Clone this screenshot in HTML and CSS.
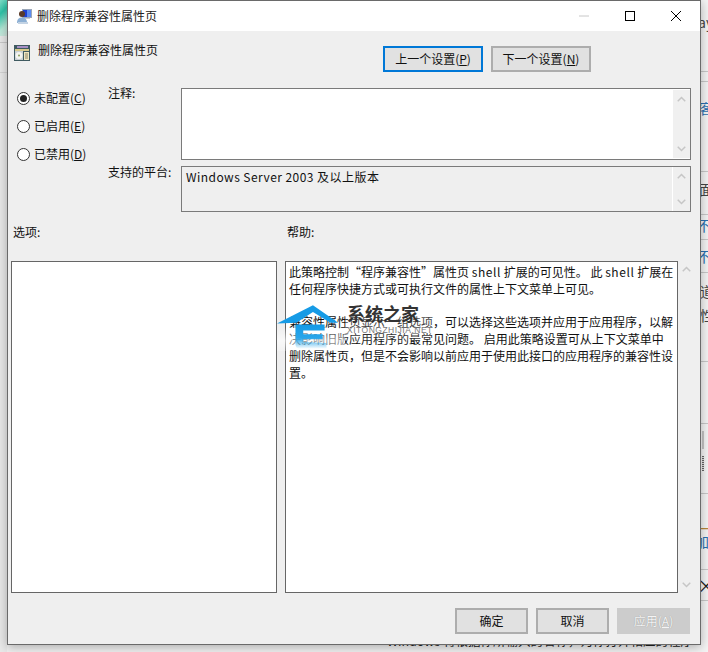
FILE: index.html
```html
<!DOCTYPE html>
<html lang="zh-CN">
<head>
    <meta charset="UTF-8">
    <title>删除程序兼容性属性页</title>
    <link rel="stylesheet" href="styles.css">
</head>
<body>
    <!-- desktop behind the dialog -->
    <div class="bg-left"></div>
    <div class="bg-right">
        <div class="bg-row row-1">ay</div>
        <div class="bg-row row-2"></div>
        <div class="bg-row row-3 blue">客</div>
        <div class="bg-row row-4">面</div>
        <div class="bg-row row-5 blue">不</div>
        <div class="bg-row row-6 blue">不</div>
        <div class="bg-row row-7">道<br>性</div>
        <div class="bg-row row-8"></div>
        <div class="bg-row row-9"><span class="bg-scroll"></span></div>
        <div class="bg-row row-10"><span class="orange">一块</span><br><span class="blue">加</span></div>
        <div class="bg-row row-11">×</div>
        <div class="bg-row row-12"></div>
    </div>
    <div class="bg-bottom">Windows 将根据你所输入的名称，为你打开相应的程序</div>

    <div class="window">
        <div class="titlebar">
            <svg class="icon" viewBox="0 0 16 16">
                <rect x="6" y="1" width="10" height="9" fill="#9aa6b8"/>
                <rect x="7" y="2" width="8" height="7" fill="#1c3fd0"/>
                <rect x="11" y="2" width="4" height="7" fill="#5c8cf0"/>
                <rect x="7" y="10" width="7" height="1" fill="#c8ccd4"/>
                <circle cx="6" cy="6" r="3" fill="#5a3a28"/>
                <path d="M1 15c0-4 2-5.500 5-5.500s5 1.500 5 5.500z" fill="#8db0d4"/>
                <rect x="2" y="14" width="10" height="2" fill="#c3d3e4"/>
            </svg>
            <span class="title-text">删除程序兼容性属性页</span>
            <div class="caption">
                <svg class="cap-btn" viewBox="0 0 46 30"><path d="M18 15h10" stroke="#c8c8c8" fill="none"/></svg>
                <svg class="cap-btn" viewBox="0 0 46 30"><rect x="18.500" y="10.500" width="9" height="9" stroke="#000" fill="none"/></svg>
                <svg class="cap-btn" viewBox="0 0 46 30"><path d="M18 10l10 10M28 10l-10 10" stroke="#000" fill="none"/></svg>
            </div>
        </div>

        <div class="dialog">
            <div class="head-row">
                <div class="policy-name">
                    <svg class="icon" viewBox="0 0 16 16">
                        <rect x="0" y="0" width="16" height="16" fill="#3f5a60"/>
                        <rect x="3" y="1" width="11" height="2" fill="#a58fc4"/>
                        <rect x="1" y="4" width="14" height="2" fill="#d8c98a"/>
                        <rect x="1" y="6" width="8" height="9" fill="#c9d0d2"/>
                        <circle cx="5" cy="10.500" r="3.500" fill="#f4f4f0"/>
                        <circle cx="5" cy="10.500" r="1" fill="#8aa05c"/>
                        <rect x="10" y="7" width="5" height="8" fill="#efe6c2"/>
                        <path d="M11 9h3M11 11h3M11 13h3" stroke="#8a8466"/>
                    </svg>
                    <span>删除程序兼容性属性页</span>
                </div>
                <div class="nav-btns">
                    <button class="btn btn-nav btn-focus">上一个设置(<u>P</u>)</button>
                    <button class="btn btn-nav">下一个设置(<u>N</u>)</button>
                </div>
            </div>

            <div class="config">
                <div class="radios">
                    <label class="radio"><span class="dot checked"></span><span>未配置(<u>C</u>)</span></label>
                    <label class="radio"><span class="dot"></span><span>已启用(<u>E</u>)</span></label>
                    <label class="radio"><span class="dot"></span><span>已禁用(<u>D</u>)</span></label>
                </div>
                <div class="field-label">注释:</div>
                <div class="box box-note">
                    <div class="scroll scroll-note">
                        <svg class="chev" viewBox="0 0 12 8"><path d="M1 7l5-5 5 5"/></svg>
                        <svg class="chev" viewBox="0 0 12 8"><path d="M1 1l5 5 5-5"/></svg>
                    </div>
                </div>
                <div class="field-label label-platform">支持的平台:</div>
                <div class="box box-platform">
                    <div class="platform-text">Windows Server 2003 及以上版本</div>
                    <div class="scroll scroll-platform">
                        <svg class="chev" viewBox="0 0 12 8"><path d="M1 7l5-5 5 5"/></svg>
                        <svg class="chev" viewBox="0 0 12 8"><path d="M1 1l5 5 5-5"/></svg>
                    </div>
                </div>
            </div>

            <div class="section-labels">
                <span class="label-options">选项:</span>
                <span>帮助:</span>
            </div>

            <div class="panes">
                <div class="pane pane-options"></div>
                <div class="pane pane-help">
                    <p>此策略控制“程序兼容性”属性页 <span class="latin">shell</span> 扩展的可见性。 此 <span class="latin">shell</span> 扩展在任何程序快捷方式或可执行文件的属性上下文菜单上可见。</p>
                    <p>兼容性属性页显示一组选项，可以选择这些选项并应用于应用程序，以解决影响旧版应用程序的最常见问题。 启用此策略设置可从上下文菜单中删除属性页，但是不会影响以前应用于使用此接口的应用程序的兼容性设置。</p>
                </div>
                <div class="scroll scroll-help">
                    <svg class="chev" viewBox="0 0 12 8"><path d="M1 7l5-5 5 5"/></svg>
                    <svg class="chev" viewBox="0 0 12 8"><path d="M1 1l5 5 5-5"/></svg>
                </div>
            </div>

            <div class="footer">
                <button class="btn btn-foot">确定</button>
                <button class="btn btn-foot">取消</button>
                <button class="btn btn-foot btn-disabled">应用(<u>A</u>)</button>
            </div>
        </div>

        <!-- site watermark over the help text -->
        <div class="watermark">
            <svg class="wm-logo" viewBox="0 0 70 48">
                <defs>
                    <linearGradient id="wmFade" x1="0" y1="0" x2="0" y2="1">
                        <stop offset="0" stop-color="#159ae6"/>
                        <stop offset="0.55" stop-color="#2aa6ea"/>
                        <stop offset="1" stop-color="#2aa6ea" stop-opacity="0"/>
                    </linearGradient>
                </defs>
                <path d="M0 20L37 1l26 18h-8L37 8 20 19z" fill="#169be6"/>
                <path d="M19 21h30v6H27v4h20v5H27v3l24 1v6H24q-5 0-5-5z" fill="url(#wmFade)"/>
            </svg>
            <div class="wm-text">
                <div class="wm-name">系统之家</div>
                <div class="wm-url">XITONGZHIJIA.NET</div>
            </div>
        </div>
    </div>
</body>
</html>
```

FILE: styles.css
```css
* { margin: 0; padding: 0; box-sizing: border-box; }

body {
    width: 708px;
    height: 652px;
    overflow: hidden;
    position: relative;
    background: #f1f1f1;
    font-family: "Noto Sans CJK SC", "Noto Sans", sans-serif;
    font-size: 12px;
    line-height: 16px;
    color: #111;
}

u { text-underline-offset: 1px; }

/* desktop fragments */
.bg-left {
    position: absolute;
    left: 0;
    top: 0;
    width: 7px;
    height: 652px;
    background:
        linear-gradient(#c9c9c9, #c9c9c9) 0 42px / 100% 1px no-repeat,
        linear-gradient(#d4d4d4, #d4d4d4) 0 72px / 100% 1px no-repeat,
        linear-gradient(135deg, #7fdcc6 0, #2fc4a8 10px, #b8ead9 22px, #e4e4e4 36px) 0 0 / 100% 36px no-repeat,
        #e9e9e9;
}

.bg-right {
    position: absolute;
    left: 690px;
    top: 0;
    width: 18px;
    height: 652px;
    display: grid;
    grid-template-rows: 72px 10px 90px 43px 25px 33px 89px 62px 70px 76px 31px 51px;
    background: #f4f4f4;
    overflow: hidden;
    font-size: 14px;
    color: #444;
}

.bg-row {
    border-bottom: 1px solid #c8c8c8;
    padding-left: 5px;
    white-space: nowrap;
    overflow: hidden;
}

.row-1 { padding-top: 14px; padding-left: 8px; }
.row-3 { padding-top: 18px; padding-left: 9px; }
.row-4 { padding-top: 9px; padding-left: 9px; }
.row-5 { padding-top: 2px; padding-left: 7px; }
.row-6 { padding-top: 8px; padding-left: 7px; }
.row-7 { padding-top: 6px; padding-left: 10px; line-height: 24px; }
.row-9 { padding-top: 7px; padding-left: 12px; }
.row-10 { padding-top: 28px; padding-left: 5px; line-height: 13px; }
.row-11 { padding-top: 2px; padding-left: 7px; font-size: 18px; line-height: 26px; color: #222; }
.row-12 { border-bottom: none; }

.bg-scroll {
    display: block;
    width: 2px;
    height: 40px;
    background:
        linear-gradient(#c4c4c4, #c4c4c4) 0 0 / 100% 18px no-repeat,
        repeating-linear-gradient(#666 0 1px, #ddd 1px 2px) 0 25px / 100% 15px no-repeat;
}

.blue { color: #2a6fb0; }
.orange { color: #b8863a; }

.bg-bottom {
    position: absolute;
    left: 387px;
    top: 632px;
    font-size: 12.500px;
    line-height: 18px;
    white-space: nowrap;
    color: #222;
}

/* dialog window */
.window {
    position: absolute;
    left: 7px;
    top: 0;
    width: 694px;
    height: 645px;
    border: 1px solid #6a6a6a;
    background: #efefef;
    box-shadow: 0 2px 10px rgba(0, 0, 0, 0.3);
    display: flex;
    flex-direction: column;
}

.titlebar {
    height: 30px;
    flex: none;
    background: #fff;
    display: flex;
    align-items: center;
    padding-left: 8px;
}

.icon {
    width: 16px;
    height: 16px;
    flex: none;
}

.title-text {
    margin-left: 5px;
    color: #222;
}

.caption {
    margin-left: auto;
    display: flex;
    padding-right: 1px;
}

.cap-btn {
    width: 46px;
    height: 30px;
}

.dialog {
    flex: 1;
    display: flex;
    flex-direction: column;
}

.head-row {
    display: flex;
    justify-content: space-between;
    height: 41px;
    padding-top: 15px;
    padding-left: 6px;
}

.policy-name {
    display: flex;
    gap: 8px;
    align-items: flex-start;
    margin-top: -2px;
}

.policy-name .icon { margin-top: 1px; }

.policy-name span { margin-top: -2px; }

.nav-btns {
    display: flex;
    gap: 8px;
    margin-right: 109px;
}

.btn {
    font: inherit;
    color: #111;
    background: #e1e1e1;
    border: 2px solid #adadad;
    height: 26px;
}

.btn-nav { width: 100px; }
.btn-focus { border-color: #0078d7; }
.btn-foot { width: 73px; }
.btn-disabled {
    background: #cccccc;
    border-color: #cccccc;
    color: #f4f4f4;
    text-shadow: 0 0 1px #8a8a8a;
}

/* settings area */
.config {
    margin-top: 16px;
    display: grid;
    grid-template-columns: 100px 73px 510px;
    grid-template-rows: 72px 46px;
    row-gap: 6px;
}

.radios {
    grid-row: 1 / 3;
    display: flex;
    flex-direction: column;
    gap: 12px;
    padding: 2px 0 0 9px;
}

.radio {
    display: flex;
    align-items: center;
    gap: 4px;
    height: 16px;
}

.dot {
    width: 13px;
    height: 13px;
    border: 1px solid #333;
    border-radius: 50%;
    background: #fff;
    position: relative;
}

.dot.checked::after {
    content: "";
    position: absolute;
    left: 2px;
    top: 2px;
    width: 7px;
    height: 7px;
    border-radius: 50%;
    background: #222;
}

.field-label { margin-top: -3px; }
.label-platform { margin-top: -2px; }

.box {
    border: 1px solid #7a7a7a;
    display: flex;
    justify-content: space-between;
}

.box-note {
    background: #fff;
    justify-content: flex-end;
}

.platform-text {
    padding: 2px 0 0 4px;
    letter-spacing: 0.45px;
}

.scroll {
    display: flex;
    flex-direction: column;
    justify-content: space-between;
    align-items: center;
    flex: none;
}

.scroll-note {
    width: 17px;
    margin: 1px 0;
    padding: 6px 0;
    background: #f0f0f0;
}

.scroll-platform {
    width: 18px;
    padding: 6px 0;
    border-left: 1px solid #fff;
}

.scroll-help {
    width: 13px;
    padding: 5px 0 5px 3px;
}

.chev {
    width: 9px;
    height: 6px;
    fill: none;
    stroke: #c6c6c6;
    stroke-width: 2;
    display: block;
}

.section-labels {
    display: flex;
    margin-top: 12px;
    padding-left: 5px;
}

.label-options { width: 274px; }

.panes {
    display: flex;
    height: 332px;
    margin: 21px 0 0 3px;
}

.pane {
    border: 1px solid #666;
    background: #fff;
}

.pane-options {
    width: 266px;
    margin-right: 8px;
}

.pane-help {
    width: 393px;
    padding: 2px 2px 0 3px;
    line-height: 16.800px;
}

.pane-help p { margin-bottom: 16.800px; }

.latin { letter-spacing: 0.6px; }

.footer {
    display: flex;
    justify-content: flex-end;
    gap: 8px;
    margin-top: 15px;
    padding-right: 10px;
}

/* watermark */
.watermark {
    position: absolute;
    left: 269px;
    top: 303px;
    display: flex;
    gap: 0;
}

.wm-logo {
    width: 68px;
    height: 47px;
    background: linear-gradient(rgba(255, 255, 255, 0) 50%, rgba(255, 255, 255, 0.6) 78%, rgba(255, 255, 255, 0.2));
}

.wm-text {
    margin-top: -3px;
    padding: 0 2px;
    height: 40px;
    background: linear-gradient(rgba(255, 255, 255, 0.3), rgba(255, 255, 255, 0.1));
}

.wm-name {
    font-size: 18px;
    line-height: 24px;
    font-weight: 700;
    color: #333;
}

.wm-url {
    font-family: "Liberation Sans", sans-serif;
    font-size: 8.500px;
    line-height: 10px;
    letter-spacing: 0.5px;
    color: #777;
}
```
